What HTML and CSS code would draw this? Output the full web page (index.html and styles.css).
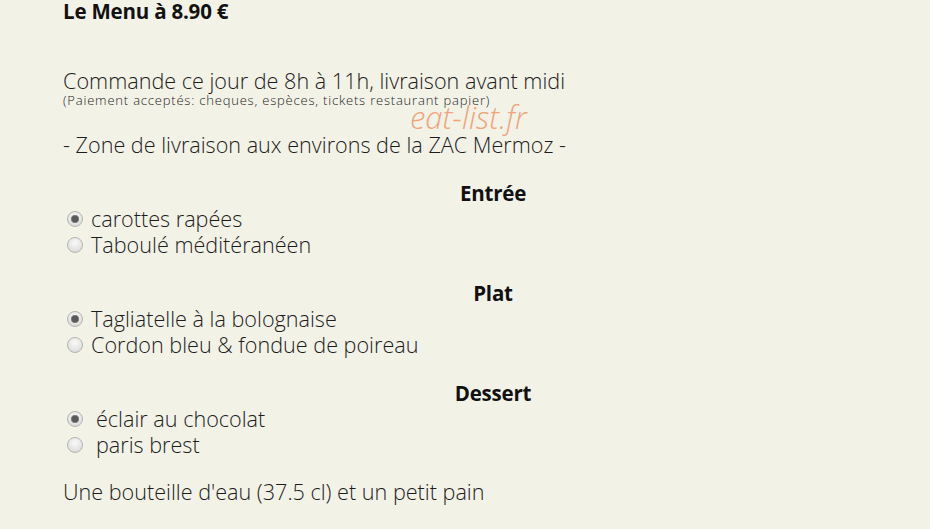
FILE: index.html
```html
<!DOCTYPE html>
<html lang="fr">
<head>
<meta charset="utf-8">
<title>Le Menu</title>
<link rel="stylesheet" href="styles.css">
</head>
<body>
<div class="menu">
  <h2 class="title">Le Menu à 8.90 €</h2>

  <div class="info">
    <p class="order">Commande ce jour de 8h à 11h, livraison avant midi</p>
    <p class="payment">(Paiement acceptés: cheques, espèces, tickets restaurant papier)</p>
    <span class="brand">eat-list.fr</span>
  </div>

  <p class="zone">- Zone de livraison aux environs de la ZAC Mermoz -</p>

  <section class="course">
    <h3 class="course-name">Entrée</h3>
    <label class="choice"><input type="radio" name="entree" checked><span>carottes rapées</span></label>
    <label class="choice"><input type="radio" name="entree"><span>Taboulé méditéranéen</span></label>
  </section>

  <section class="course">
    <h3 class="course-name">Plat</h3>
    <label class="choice"><input type="radio" name="plat" checked><span>Tagliatelle à la bolognaise</span></label>
    <label class="choice"><input type="radio" name="plat"><span>Cordon bleu &amp; fondue de poireau</span></label>
  </section>

  <section class="course">
    <h3 class="course-name">Dessert</h3>
    <label class="choice spaced"><input type="radio" name="dessert" checked><span>éclair au chocolat</span></label>
    <label class="choice spaced"><input type="radio" name="dessert"><span>paris brest</span></label>
  </section>

  <p class="extra">Une bouteille d'eau (37.5 cl) et un petit pain</p>
</div>
</body>
</html>
```

FILE: styles.css
```css
html, body {
  margin: 0;
  padding: 0;
  background: #f3f2e7;
}

body {
  font-family: "Open Sans", Lato, sans-serif;
  font-weight: 300;
  color: #1c1c1c;
}

.menu {
  width: 860px;
  padding: 0 0 0 63px;
}

.title {
  margin: 0;
  font-size: 20.5px;
  font-weight: 700;
  line-height: 22px;
  letter-spacing: -0.2px;
  color: #111;
}

.info {
  position: relative;
  margin-top: 46px;
}

.order {
  margin: 0;
  font-size: 21.6px;
  line-height: 26px;
}

.payment {
  margin: -1px 0 0;
  font-size: 13px;
  line-height: 14px;
  letter-spacing: 0.8px;
}

.brand {
  position: absolute;
  left: 347px;
  top: 28px;
  font-size: 31px;
  font-style: italic;
  font-weight: 300;
  color: #f0a47a;
}

.zone {
  margin: 25px 0 0;
  font-size: 21.6px;
  line-height: 26px;
}

.course {
  display: flex;
  flex-direction: column;
  margin-top: 22px;
}

.course-name {
  margin: 0;
  text-align: center;
  font-size: 20.5px;
  font-weight: 700;
  line-height: 26px;
  letter-spacing: -0.2px;
  color: #111;
}

.choice {
  display: flex;
  align-items: center;
  font-size: 21.6px;
  line-height: 26px;
}

.choice input {
  appearance: none;
  -webkit-appearance: none;
  flex: none;
  width: 16px;
  height: 16px;
  margin: 0 8px 1px 4px;
  border: 1px solid #b4b4b0;
  border-radius: 50%;
  background: radial-gradient(circle at 50% 35%, #fafafa 0%, #e4e4e2 60%, #d2d2d0 100%);
}

.choice input:checked {
  background:
    radial-gradient(circle, #5a5a5a 0, #5a5a5a 3px, #9a9a9a 4px, transparent 4.5px),
    radial-gradient(circle at 50% 35%, #fafafa 0%, #e4e4e2 60%, #d2d2d0 100%);
}

.choice.spaced input {
  margin-right: 13px;
}

.extra {
  margin: 21px 0 0;
  font-size: 21.6px;
  line-height: 26px;
}
```
